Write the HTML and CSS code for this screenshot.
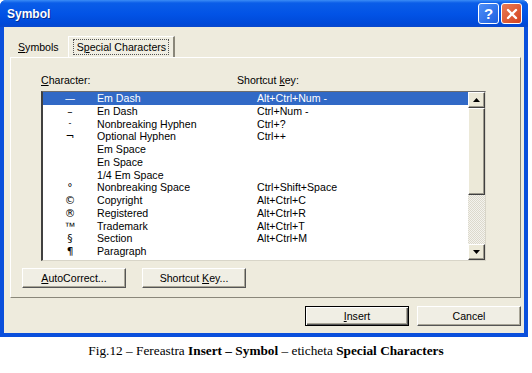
FILE: index.html
```html
<!DOCTYPE html>
<html lang="en">
  <head>
    <meta charset="UTF-8" />
    <title>Symbol</title>
    <link rel="stylesheet" href="styles.css">
  </head>
  <body>
    <div class="window">
      <div class="titlebar">
        <span class="title">Symbol</span>
        <span class="tbtn help">?</span>
        <span class="tbtn close">
          <svg width="12" height="12" viewBox="0 0 12 12"><path d="M2 2 L10 10 M10 2 L2 10" stroke="#fff" stroke-width="2.4" stroke-linecap="round"/></svg>
        </span>
      </div>
      <div class="client">
        <div class="tabs">
          <div class="tab"><u>S</u>ymbols</div>
          <div class="tab active"><span class="focus">S<u>p</u>ecial Characters</span></div>
        </div>
        <div class="panel">
          <div class="labels">
            <span class="lab-char"><u>C</u>haracter:</span>
            <span>Shortcut <u>k</u>ey:</span>
          </div>
          <div class="listbox">
            <ul class="rows">
              <li class="sel"><span class="sym">&mdash;</span><span class="name">Em Dash</span><span class="key">Alt+Ctrl+Num -</span></li>
              <li><span class="sym">&ndash;</span><span class="name">En Dash</span><span class="key">Ctrl+Num -</span></li>
              <li><span class="sym small">-</span><span class="name">Nonbreaking Hyphen</span><span class="key">Ctrl+?</span></li>
              <li><span class="sym">&not;</span><span class="name">Optional Hyphen</span><span class="key">Ctrl++</span></li>
              <li><span class="sym"></span><span class="name">Em Space</span><span class="key"></span></li>
              <li><span class="sym"></span><span class="name">En Space</span><span class="key"></span></li>
              <li><span class="sym"></span><span class="name">1/4 Em Space</span><span class="key"></span></li>
              <li><span class="sym">&deg;</span><span class="name">Nonbreaking Space</span><span class="key">Ctrl+Shift+Space</span></li>
              <li><span class="sym">&copy;</span><span class="name">Copyright</span><span class="key">Alt+Ctrl+C</span></li>
              <li><span class="sym">&reg;</span><span class="name">Registered</span><span class="key">Alt+Ctrl+R</span></li>
              <li><span class="sym tm">&trade;</span><span class="name">Trademark</span><span class="key">Alt+Ctrl+T</span></li>
              <li><span class="sym">&sect;</span><span class="name">Section</span><span class="key">Alt+Ctrl+M</span></li>
              <li><span class="sym">&para;</span><span class="name">Paragraph</span><span class="key"></span></li>
            </ul>
            <div class="scrollbar">
              <div class="sbtn"><svg width="7" height="4" viewBox="0 0 7 4"><path d="M3.5 0 L7 4 L0 4 Z" fill="#000"/></svg></div>
              <div class="thumb"></div>
              <div class="track"></div>
              <div class="sbtn"><svg width="7" height="4" viewBox="0 0 7 4"><path d="M0 0 L7 0 L3.5 4 Z" fill="#000"/></svg></div>
            </div>
          </div>
          <div class="panel-buttons">
            <div class="btn"><span><u>A</u>utoCorrect...</span></div>
            <div class="btn"><span>Shortcut <u>K</u>ey...</span></div>
          </div>
        </div>
        <div class="footer">
          <div class="btn default"><span><u>I</u>nsert</span></div>
          <div class="btn"><span>Cancel</span></div>
        </div>
      </div>
    </div>
    <p class="caption">Fig.12 &ndash; Fereastra <b>Insert &ndash; Symbol</b> &ndash; eticheta <b>Special Characters</b></p>
  </body>
</html>
```

FILE: styles.css
```css
* {
  margin: 0;
  padding: 0;
  box-sizing: border-box;
}
body {
  background: #fff;
  width: 532px;
  font-family: "Liberation Sans", Arial, sans-serif;
  font-size: 10.6px;
  color: #000;
}
u {
  text-decoration: underline;
}
.window {
  width: 528px;
  height: 337px;
  background: #0a4fdc;
  border-radius: 6px 6px 0 0;
  padding: 0 4px 4px 4px;
  display: flex;
  flex-direction: column;
}
.titlebar {
  height: 27px;
  display: flex;
  align-items: center;
  margin: 0 -4px;
  padding: 0 6px 0 7px;
  border-radius: 6px 6px 0 0;
  background: linear-gradient(#3b8cf6 0, #0a5de8 3px, #0253e6 14px, #0049d8 24px, #0a48cc 27px);
}
.title {
  flex: 1;
  color: #fff;
  font-weight: bold;
  font-size: 12px;
  text-shadow: 1px 1px 0 #0a2e8c;
}
.tbtn {
  width: 21px;
  height: 21px;
  border: 1px solid #fff;
  border-radius: 3px;
  display: flex;
  align-items: center;
  justify-content: center;
  color: #fff;
  font-weight: bold;
  font-size: 15px;
}
.help {
  background: linear-gradient(135deg, #4e8ff8, #1c5fe0);
  margin-right: 2px;
}
.close {
  background: linear-gradient(135deg, #e97b55, #d4431f);
}
.client {
  flex: 1;
  background: #eeebdd;
  padding: 9px 3px 0 6px;
  display: flex;
  flex-direction: column;
}
.tabs {
  display: flex;
  align-items: flex-end;
  height: 21px;
}
.tab {
  padding: 0 6px 4px 8px;
}
.tab.active {
  height: 21px;
  padding: 2px 4px 0 4px;
  background: #f0eee2;
  border-top: 1px solid #fff;
  border-left: 1px solid #fff;
  border-right: 2px solid #8a877a;
  margin-left: 3px;
}
.focus {
  display: inline-block;
  border: 1px dotted #555;
  padding: 1px 2px 1px 3px;
}
.panel {
  height: 241px;
  width: 511px;
  border-top: 1px solid #fff;
  border-left: 1px solid #fff;
  border-right: 1px solid #8a877a;
  border-bottom: 1px solid #8a877a;
  padding: 16px 0 0 30px;
  display: flex;
  flex-direction: column;
}
.labels {
  display: flex;
  height: 12px;
  line-height: 12px;
}
.lab-char {
  width: 196px;
}
.listbox {
  margin-top: 5px;
  width: 445px;
  height: 170px;
  background: #fff;
  border-top: 1px solid #6d6d6d;
  border-left: 2px solid #404040;
  border-right: 1px solid #d8d5c8;
  border-bottom: 1px solid #d8d5c8;
  display: flex;
}
.rows {
  list-style: none;
  flex: 1;
}
.rows li {
  display: flex;
  height: 12.75px;
  line-height: 12.75px;
  white-space: nowrap;
}
.rows li.sel {
  background: #3169c6;
  color: #fff;
}
.sym {
  width: 54px;
  text-align: center;
  font-family: "DejaVu Sans", sans-serif;
  font-size: 10.6px;
}
.sym.small {
  font-size: 8px;
}
.sym.tm {
  font-family: "Liberation Sans", sans-serif;
  font-size: 11px;
}
.name {
  width: 160px;
}
.scrollbar {
  width: 17px;
  display: flex;
  flex-direction: column;
  background: repeating-conic-gradient(#f4f3ee 0 25%, #dcd9cc 0 50%) 0 0 / 2px 2px;
}
.sbtn {
  height: 16px;
  background: #ece9d8;
  border-top: 1px solid #fff;
  border-left: 1px solid #fff;
  border-right: 1px solid #404040;
  border-bottom: 1px solid #404040;
  box-shadow: inset -1px -1px 0 #9d9a8e;
  display: flex;
  align-items: center;
  justify-content: center;
}
.thumb {
  height: 87px;
  background: #ece9d8;
  border-top: 1px solid #fff;
  border-left: 1px solid #fff;
  border-right: 1px solid #404040;
  border-bottom: 1px solid #404040;
  box-shadow: inset -1px -1px 0 #9d9a8e;
}
.track {
  flex: 1;
}
.panel-buttons {
  display: flex;
  gap: 16px;
  margin: 7px 0 0 -19px;
}
.btn {
  width: 104px;
  height: 20px;
  display: flex;
  align-items: center;
  justify-content: center;
  background: #f0eee4;
  border-top: 1px solid #fff;
  border-left: 1px solid #fff;
  border-right: 1px solid #555;
  border-bottom: 1px solid #555;
  box-shadow: inset -1px -1px 0 #a8a597;
}
.footer {
  display: flex;
  justify-content: flex-end;
  gap: 8px;
  padding: 8px 0 0 0;
}
.btn.default {
  border: 1px solid #000;
  box-shadow: inset 1px 1px 0 #fff, inset -1px -1px 0 #555, inset -2px -2px 0 #a8a597;
}
.caption {
  font-family: "Liberation Serif", "Times New Roman", serif;
  font-size: 13.3px;
  text-align: center;
  margin-top: 6px;
  width: 532px;
}
```
